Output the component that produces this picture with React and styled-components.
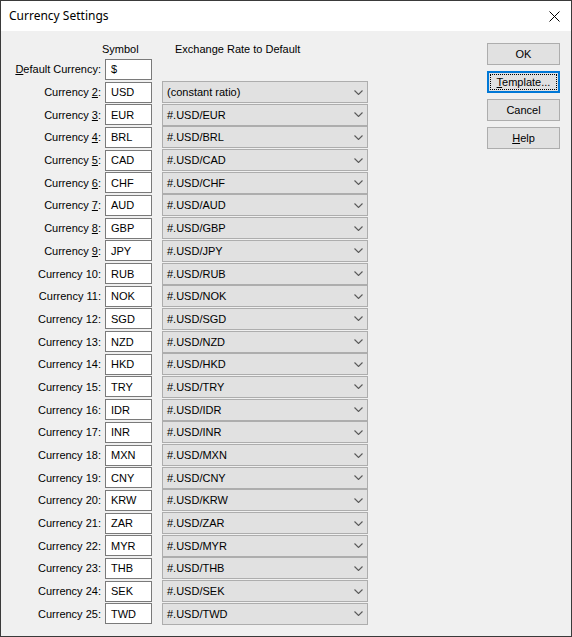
import React from 'react';
import styled, { createGlobalStyle } from 'styled-components';

const GlobalStyle = createGlobalStyle`
  html, body {
    margin: 0;
    padding: 0;
    background: #f0f0f0;
  }
  * {
    box-sizing: border-box;
  }
`;

const Window = styled.div`
  width: 572px;
  height: 637px;
  border: 1px solid #3a3a3a;
  background: #f0f0f0;
  display: flex;
  flex-direction: column;
  font-family: "Liberation Sans", Arial, sans-serif;
  font-size: 11px;
  color: #000;
  overflow: hidden;
`;

const TitleBar = styled.div`
  height: 30px;
  flex-shrink: 0;
  background: #fff;
  display: flex;
  align-items: center;
  padding: 0 10px 0 8px;
`;

const Title = styled.div`
  font-family: "Noto Sans", "Open Sans", sans-serif;
  font-size: 12px;
  margin-top: -1px;
`;

const CloseButton = styled.div`
  margin-left: auto;
  display: flex;
  align-items: center;
  justify-content: center;
  width: 14px;
  height: 14px;
`;

const Body = styled.div`
  flex: 1;
  display: flex;
`;

const Form = styled.div`
  display: grid;
  grid-template-columns: 104px 57px 206px;
  grid-template-rows: 19px repeat(25, 22.7px);
  padding-top: 8px;
  align-content: start;
`;

const HeaderText = styled.div`
  grid-column: ${(p) => p.$col};
  align-self: center;
  margin-left: ${(p) => p.$offset}px;
  white-space: nowrap;
`;

const Label = styled.label`
  grid-column: 1;
  align-self: center;
  text-align: right;
  padding-right: 4px;
  white-space: nowrap;
`;

const Key = styled.span`
  text-decoration: underline;
  text-underline-offset: 1px;
`;

const SymbolInput = styled.div`
  grid-column: 2;
  align-self: center;
  width: 47px;
  height: 21px;
  background: #fff;
  border: 1px solid #7a7a7a;
  display: flex;
  align-items: center;
  padding-left: 5px;
`;

const RateSelect = styled.div`
  grid-column: 3;
  align-self: center;
  height: 22px;
  background: #e1e1e1;
  border: 1px solid #adadad;
  display: flex;
  align-items: center;
  padding: 0 4px 0 4px;
`;

const RateText = styled.span`
  flex: 1;
`;

const Chevron = styled.svg`
  width: 9px;
  height: 5px;
  margin-right: 0;
`;

const ButtonColumn = styled.div`
  margin-left: auto;
  padding: 12px 11px 0 0;
  display: flex;
  flex-direction: column;
  gap: 6px;
`;

const Button = styled.div`
  position: relative;
  width: 73px;
  height: 22px;
  background: #e1e1e1;
  border: 1px solid ${(p) => (p.$focused ? '#0078d7' : '#adadad')};
  box-shadow: ${(p) => (p.$focused ? 'inset 0 0 0 1px #0078d7' : 'none')};
  display: flex;
  align-items: center;
  justify-content: center;

  &::after {
    content: '';
    display: ${(p) => (p.$focused ? 'block' : 'none')};
    position: absolute;
    inset: 2px;
    border: 1px dotted #000;
  }
`;

const symbols = [
  'USD', 'EUR', 'BRL', 'CAD', 'CHF', 'AUD', 'GBP', 'JPY', 'RUB', 'NOK', 'SGD', 'NZD',
  'HKD', 'TRY', 'IDR', 'INR', 'MXN', 'CNY', 'KRW', 'ZAR', 'MYR', 'THB', 'SEK', 'TWD',
];

const ChevronIcon = () => (
  <Chevron viewBox="0 0 9 5">
    <polyline points="0.5,0.5 4.5,4.5 8.5,0.5" fill="none" stroke="#5a5a5a" strokeWidth="1.1" />
  </Chevron>
);

const CurrencyLabel = ({ n }) =>
  n < 10 ? (
    <Label>Currency <Key>{n}</Key>:</Label>
  ) : (
    <Label>Currency {n}:</Label>
  );

const App = () => {
  return (
    <>
      <GlobalStyle />
      <Window>
        <TitleBar>
          <Title>Currency Settings</Title>
          <CloseButton>
            <svg width="11" height="11" viewBox="0 0 11 11">
              <path d="M0.5 0.5 L10.5 10.5 M10.5 0.5 L0.5 10.5" stroke="#000" strokeWidth="1" />
            </svg>
          </CloseButton>
        </TitleBar>
        <Body>
          <Form>
            <HeaderText $col={2} $offset={-3}>Symbol</HeaderText>
            <HeaderText $col={3} $offset={13}>Exchange Rate to Default</HeaderText>

            <Label><Key>D</Key>efault Currency:</Label>
            <SymbolInput>$</SymbolInput>
            <div />

            {symbols.map((sym, i) => (
              <React.Fragment key={sym}>
                <CurrencyLabel n={i + 2} />
                <SymbolInput>{sym}</SymbolInput>
                <RateSelect>
                  <RateText>{i === 0 ? '(constant ratio)' : `#.USD/${sym}`}</RateText>
                  <ChevronIcon />
                </RateSelect>
              </React.Fragment>
            ))}
          </Form>
          <ButtonColumn>
            <Button>OK</Button>
            <Button $focused><span><Key>T</Key>emplate...</span></Button>
            <Button>Cancel</Button>
            <Button><span><Key>H</Key>elp</span></Button>
          </ButtonColumn>
        </Body>
      </Window>
    </>
  );
};

export default App;
